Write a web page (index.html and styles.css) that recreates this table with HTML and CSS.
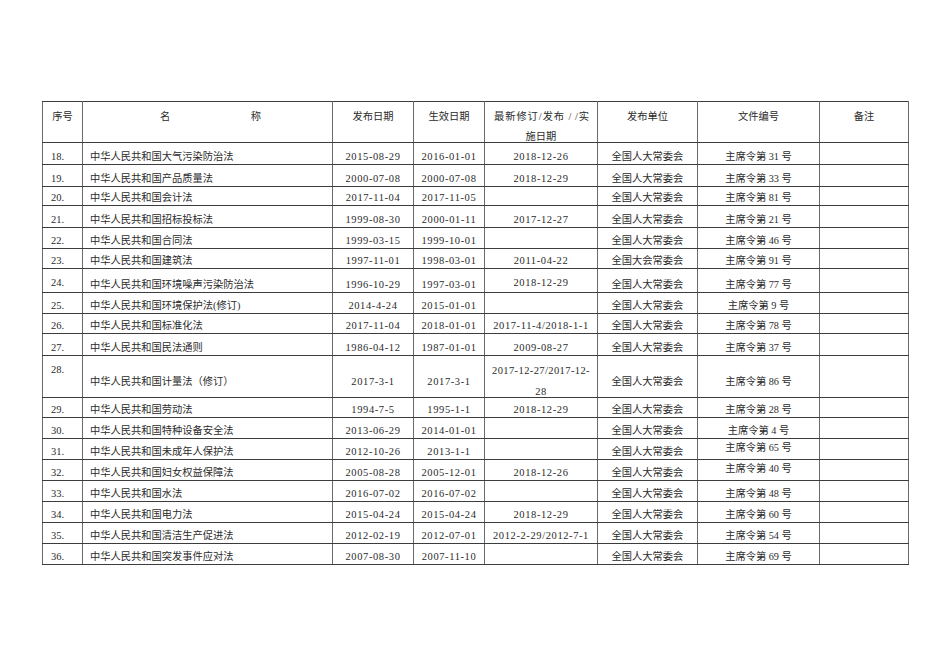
FILE: index.html
```html
<!DOCTYPE html>
<html lang="zh-CN">
<head>
<meta charset="utf-8">
<title>法律法规清单</title>
<link rel="stylesheet" href="styles.css">
</head>
<body>
<div class="page">
<table class="laws">
<colgroup>
<col class="c1"><col class="c2"><col class="c3"><col class="c4"><col class="c5"><col class="c6"><col class="c7"><col class="c8">
</colgroup>
<thead>
<tr class="h41">
<th>序号</th>
<th><div class="spread"><span>名</span><span>称</span></div></th>
<th>发布日期</th>
<th>生效日期</th>
<th><div class="hd"><div class="jl">最新修订/发布 / /实</div><div>施日期</div></div></th>
<th>发布单位</th>
<th>文件编号</th>
<th>备注</th>
</tr>
</thead>
<tbody>
<tr class="h22"><td class="no">18.</td><td class="nm">中华人民共和国大气污染防治法</td><td class="d">2015-08-29</td><td class="d">2016-01-01</td><td class="d">2018-12-26</td><td class="ct">全国人大常委会</td><td class="ct">主席令第 31 号</td><td></td></tr>
<tr class="h22"><td class="no">19.</td><td class="nm">中华人民共和国产品质量法</td><td class="d">2000-07-08</td><td class="d">2000-07-08</td><td class="d">2018-12-29</td><td class="ct">全国人大常委会</td><td class="ct">主席令第 33 号</td><td></td></tr>
<tr class="h19"><td class="no">20.</td><td class="nm">中华人民共和国会计法</td><td class="d">2017-11-04</td><td class="d">2017-11-05</td><td class="d"></td><td class="ct">全国人大常委会</td><td class="ct">主席令第 81 号</td><td></td></tr>
<tr class="h22"><td class="no">21.</td><td class="nm">中华人民共和国招标投标法</td><td class="d">1999-08-30</td><td class="d">2000-01-11</td><td class="d">2017-12-27</td><td class="ct">全国人大常委会</td><td class="ct">主席令第 21 号</td><td></td></tr>
<tr class="h21"><td class="no">22.</td><td class="nm">中华人民共和国合同法</td><td class="d">1999-03-15</td><td class="d">1999-10-01</td><td class="d"></td><td class="ct">全国人大常委会</td><td class="ct">主席令第 46 号</td><td></td></tr>
<tr class="h20"><td class="no">23.</td><td class="nm">中华人民共和国建筑法</td><td class="d">1997-11-01</td><td class="d">1998-03-01</td><td class="d">2011-04-22</td><td class="ct">全国大会常委会</td><td class="ct">主席令第 91 号</td><td></td></tr>
<tr class="h24"><td class="no up">24.</td><td class="nm">中华人民共和国环境噪声污染防治法</td><td class="d">1996-10-29</td><td class="d">1997-03-01</td><td class="d up">2018-12-29</td><td class="ct">全国人大常委会</td><td class="ct">主席令第 77 号</td><td></td></tr>
<tr class="h21"><td class="no">25.</td><td class="nm">中华人民共和国环境保护法(修订)</td><td class="d">2014-4-24</td><td class="d">2015-01-01</td><td class="d"></td><td class="ct">全国人大常委会</td><td class="ct">主席令第 9 号</td><td></td></tr>
<tr class="h20"><td class="no">26.</td><td class="nm">中华人民共和国标准化法</td><td class="d">2017-11-04</td><td class="d">2018-01-01</td><td class="d">2017-11-4/2018-1-1</td><td class="ct">全国人大常委会</td><td class="ct">主席令第 78 号</td><td></td></tr>
<tr class="h22"><td class="no">27.</td><td class="nm">中华人民共和国民法通则</td><td class="d">1986-04-12</td><td class="d">1987-01-01</td><td class="d">2009-08-27</td><td class="ct">全国人大常委会</td><td class="ct">主席令第 37 号</td><td></td></tr>
<tr class="h42 tall"><td class="no first">28.</td><td class="nm">中华人民共和国计量法（修订）</td><td class="d">2017-3-1</td><td class="d">2017-3-1</td><td class="d two"><div class="wrap2">2017-12-27/2017-12-<br>28</div></td><td class="ct">全国人大常委会</td><td class="ct">主席令第 86 号</td><td></td></tr>
<tr class="h20"><td class="no">29.</td><td class="nm">中华人民共和国劳动法</td><td class="d">1994-7-5</td><td class="d">1995-1-1</td><td class="d">2018-12-29</td><td class="ct">全国人大常委会</td><td class="ct">主席令第 28 号</td><td></td></tr>
<tr class="h21"><td class="no">30.</td><td class="nm">中华人民共和国特种设备安全法</td><td class="d">2013-06-29</td><td class="d">2014-01-01</td><td class="d"></td><td class="ct">全国人大常委会</td><td class="ct">主席令第 4 号</td><td></td></tr>
<tr class="h21"><td class="no">31.</td><td class="nm">中华人民共和国未成年人保护法</td><td class="d">2012-10-26</td><td class="d">2013-1-1</td><td class="d"></td><td class="ct">全国人大常委会</td><td class="ct up4">主席令第 65 号</td><td></td></tr>
<tr class="h21"><td class="no">32.</td><td class="nm">中华人民共和国妇女权益保障法</td><td class="d">2005-08-28</td><td class="d">2005-12-01</td><td class="d">2018-12-26</td><td class="ct">全国人大常委会</td><td class="ct up4">主席令第 40 号</td><td></td></tr>
<tr class="h21"><td class="no">33.</td><td class="nm">中华人民共和国水法</td><td class="d">2016-07-02</td><td class="d">2016-07-02</td><td class="d"></td><td class="ct">全国人大常委会</td><td class="ct">主席令第 48 号</td><td></td></tr>
<tr class="h21"><td class="no">34.</td><td class="nm">中华人民共和国电力法</td><td class="d">2015-04-24</td><td class="d">2015-04-24</td><td class="d">2018-12-29</td><td class="ct">全国人大常委会</td><td class="ct">主席令第 60 号</td><td></td></tr>
<tr class="h21"><td class="no">35.</td><td class="nm">中华人民共和国清洁生产促进法</td><td class="d">2012-02-19</td><td class="d">2012-07-01</td><td class="d">2012-2-29/2012-7-1</td><td class="ct">全国人大常委会</td><td class="ct">主席令第 54 号</td><td></td></tr>
<tr class="h21"><td class="no">36.</td><td class="nm">中华人民共和国突发事件应对法</td><td class="d">2007-08-30</td><td class="d">2007-11-10</td><td class="d"></td><td class="ct">全国人大常委会</td><td class="ct">主席令第 69 号</td><td></td></tr>
</tbody>
</table>
</div>
</body>
</html>
```
FILE: styles.css
```css
html, body {
  margin: 0;
  padding: 0;
  background: #ffffff;
}

.page {
  padding: 101px 0 0 42px;
}

.laws {
  border-collapse: collapse;
  table-layout: fixed;
  width: 866px;
  font-family: "Liberation Serif", "Noto Sans CJK SC", serif;
  font-size: 10.25px;
  color: #2b2b2b;
}

.c1 { width: 40px; }
.c2 { width: 250px; }
.c3 { width: 81px; }
.c4 { width: 71px; }
.c5 { width: 113px; }
.c6 { width: 100px; }
.c7 { width: 122px; }
.c8 { width: 89px; }

.laws th,
.laws td {
  border-top: 1px solid #3c3c3c;
  border-bottom: 1px solid #3c3c3c;
  border-left: 1px solid #6a6a6a;
  border-right: 1px solid #6a6a6a;
  padding: 0;
  white-space: nowrap;
}

.laws th {
  font-weight: normal;
  vertical-align: top;
  text-align: center;
  line-height: 20px;
  padding-top: 5px;
}

.hd {
  height: 20px;
}

.laws td {
  vertical-align: bottom;
  line-height: 14px;
}

.h19 { height: 19px; }
.h20 { height: 20px; }
.h21 { height: 21px; }
.h22 { height: 22px; }
.h24 { height: 24px; }
.h41 { height: 41px; }
.h42 { height: 42px; }

.spread {
  display: flex;
  justify-content: space-between;
  padding: 0 71px 0 77px;
}

.jl {
  padding: 0 8px 0 9px;
  text-align: justify;
  text-align-last: justify;
}

.laws td.no {
  padding-left: 8px;
  font-size: 10.5px;
}

.laws td.nm {
  padding-left: 7px;
  text-align: left;
}

.laws td.d {
  text-align: center;
  font-size: 10.5px;
  letter-spacing: 0.6px;
}

.laws td.ct {
  text-align: center;
}

.laws td.up {
  padding-bottom: 2px;
}

.laws td.up4 {
  padding-bottom: 4px;
}

.tall td {
  vertical-align: top;
  padding-top: 19px;
}

.laws .tall td.first {
  padding-top: 7px;
}

.laws .tall td.two {
  padding-top: 4px;
  letter-spacing: 0.4px;
}

.wrap2 {
  height: 30px;
  line-height: 21px;
}
```
